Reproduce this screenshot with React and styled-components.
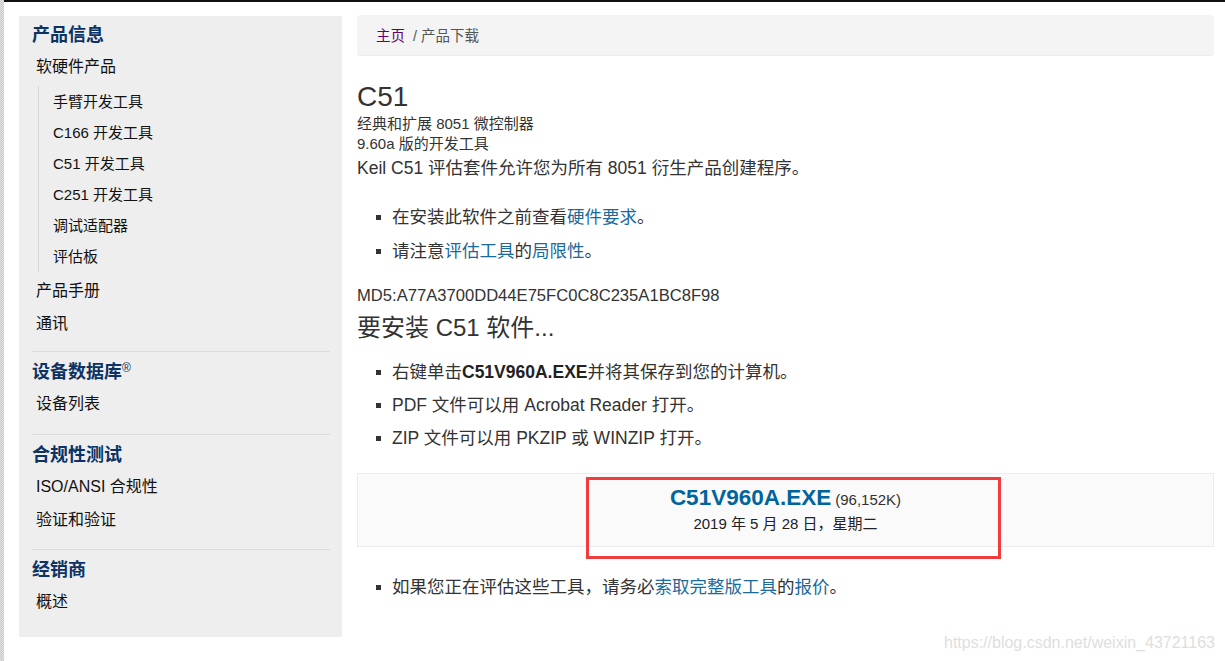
import React from "react";
import styled, { createGlobalStyle } from "styled-components";

const Global = createGlobalStyle`
  html, body { margin: 0; padding: 0; background: #fff; }
  body {
    font-family: "Liberation Sans", Arial, "Noto Sans CJK SC", sans-serif;
    color: #333;
  }
  * { box-sizing: border-box; }
`;

const Page = styled.div`
  display: flex;
  min-height: 661px;
  position: relative;
  overflow: hidden;
`;

const Strip = styled.div`
  width: 4px;
  flex: none;
  background: repeating-conic-gradient(#c9c9c9 0 25%, #e4e4e4 0 50%) 0 0 / 2px 2px;
`;

const Content = styled.div`
  flex: 1;
  display: flex;
  align-items: flex-start;
  gap: 15px;
  border-top: 2px solid #111;
  padding: 13px 11px 0 15px;
`;

const Sidebar = styled.nav`
  width: 323px;
  flex: none;
  margin-top: 1px;
  background: #eeeeee;
  padding: 6px 12px 19px 13px;
`;

const SideHeading = styled.div`
  font-size: 18px;
  line-height: 26px;
  font-weight: bold;
  color: #0c3363;
  margin-bottom: 2px;
  sup { font-size: 12px; font-weight: normal; vertical-align: 6px; line-height: 0; }
`;

const SideItem = styled.div`
  font-size: 16px;
  line-height: 33px;
  height: 33px;
  padding-left: 4px;
  color: #111;
`;

const SubList = styled.div`
  margin: 3px 0 2px 6px;
  border-left: 1px solid #d6d6d6;
  padding-left: 14px;
`;

const SubItem = styled.div`
  font-size: 15px;
  line-height: 31px;
  height: 31px;
  color: #111;
`;

const Divider = styled.hr`
  border: 0;
  border-top: 1px solid #dcdcdc;
  margin: ${(p) => p.$mt}px 0 7px;
`;

const Main = styled.main`
  flex: 1;
  min-width: 0;
`;

const Breadcrumb = styled.div`
  height: 41px;
  background: #f4f4f4;
  border-radius: 4px;
  border-bottom: 1px solid #ececec;
  padding: 0 19px 2px;
  display: flex;
  align-items: center;
  font-size: 14.5px;
  color: #555;
`;

const Crumb = styled.span`
  color: ${(p) => (p.$link ? "#660066" : "#555")};
  margin-right: ${(p) => (p.$link ? "8px" : "0")};
`;

const Title = styled.h1`
  font-size: 28px;
  line-height: 32px;
  font-weight: normal;
  color: #333;
  margin: 25px 0 1px;
`;

const Sub = styled.div`
  font-size: 15px;
  line-height: 20px;
  color: #333;
`;

const Lead = styled.p`
  font-size: 17.5px;
  line-height: 26px;
  margin: 1px 0 0;
`;

const List = styled.ul`
  list-style: none;
  margin: ${(p) => p.$mt}px 0 0;
  padding: 0 0 0 35px;
  display: flex;
  flex-direction: column;
  gap: ${(p) => p.$gap}px;
`;

const Li = styled.li`
  position: relative;
  font-size: 17.5px;
  line-height: 24px;
  color: #333;
  &::before {
    content: "";
    position: absolute;
    left: -16px;
    top: 10px;
    width: 5px;
    height: 5px;
    background: #333;
  }
  b { color: #222; }
`;

const A = styled.span`
  color: #1a6a9c;
`;

const Md5 = styled.div`
  font-size: 16.6px;
  line-height: 24px;
  margin-top: 21px;
`;

const H2 = styled.h2`
  font-size: 24px;
  line-height: 30px;
  font-weight: normal;
  margin: 5px 0 0;
  color: #333;
`;

const Download = styled.div`
  position: relative;
  margin-top: 23px;
  background: #fafafa;
  border: 1px solid #ececec;
  padding: 10px 0 12px;
  text-align: center;
`;

const FileLine = styled.div`
  line-height: 28px;
  font-size: 15px;
  color: #333;
`;

const FileName = styled.span`
  font-size: 22.5px;
  font-weight: bold;
  color: #00659c;
  margin-right: 4px;
`;

const DateLine = styled.div`
  font-size: 15px;
  line-height: 20px;
  color: #222;
`;

const Highlight = styled.div`
  position: absolute;
  left: 228px;
  top: 3px;
  width: 415px;
  height: 82px;
  border: 3px solid #f03c3c;
  pointer-events: none;
`;

const Watermark = styled.div`
  position: absolute;
  right: 10px;
  bottom: 9px;
  font-size: 16px;
  color: #dedede;
  font-family: "Liberation Sans", Arial, sans-serif;
`;

export default function App() {
  return (
    <>
      <Global />
      <Page>
        <Strip />
        <Content>
          <Sidebar>
            <SideHeading>产品信息</SideHeading>
            <SideItem>软硬件产品</SideItem>
            <SubList>
              <SubItem>手臂开发工具</SubItem>
              <SubItem>C166 开发工具</SubItem>
              <SubItem>C51 开发工具</SubItem>
              <SubItem>C251 开发工具</SubItem>
              <SubItem>调试适配器</SubItem>
              <SubItem>评估板</SubItem>
            </SubList>
            <SideItem>产品手册</SideItem>
            <SideItem>通讯</SideItem>
            <Divider $mt={11} />
            <SideHeading>
              设备数据库<sup>®</sup>
            </SideHeading>
            <SideItem>设备列表</SideItem>
            <Divider $mt={14} />
            <SideHeading>合规性测试</SideHeading>
            <SideItem>ISO/ANSI 合规性</SideItem>
            <SideItem>验证和验证</SideItem>
            <Divider $mt={13} />
            <SideHeading>经销商</SideHeading>
            <SideItem>概述</SideItem>
          </Sidebar>
          <Main>
            <Breadcrumb>
              <Crumb $link>主页</Crumb>
              <Crumb>/ 产品下载</Crumb>
            </Breadcrumb>
            <Title>C51</Title>
            <Sub>经典和扩展 8051 微控制器</Sub>
            <Sub>9.60a 版的开发工具</Sub>
            <Lead>Keil C51 评估套件允许您为所有 8051 衍生产品创建程序。</Lead>
            <List $mt={24} $gap={10}>
              <Li>
                在安装此软件之前查看<A>硬件要求</A>。
              </Li>
              <Li>
                请注意<A>评估工具</A>的<A>局限性</A>。
              </Li>
            </List>
            <Md5>MD5:A77A3700DD44E75FC0C8C235A1BC8F98</Md5>
            <H2>要安装 C51 软件...</H2>
            <List $mt={17} $gap={9}>
              <Li>
                右键单击<b>C51V960A.EXE</b>并将其保存到您的计算机。
              </Li>
              <Li>PDF 文件可以用 Acrobat Reader 打开。</Li>
              <Li>ZIP 文件可以用 PKZIP 或 WINZIP 打开。</Li>
            </List>
            <Download>
              <FileLine>
                <FileName>C51V960A.EXE</FileName>(96,152K)
              </FileLine>
              <DateLine>2019 年 5 月 28 日，星期二</DateLine>
              <Highlight />
            </Download>
            <List $mt={28} $gap={9}>
              <Li>
                如果您正在评估这些工具，请务必<A>索取完整版工具</A>的<A>报价</A>。
              </Li>
            </List>
          </Main>
        </Content>
        <Watermark>https://blog.csdn.net/weixin_43721163</Watermark>
      </Page>
    </>
  );
}
